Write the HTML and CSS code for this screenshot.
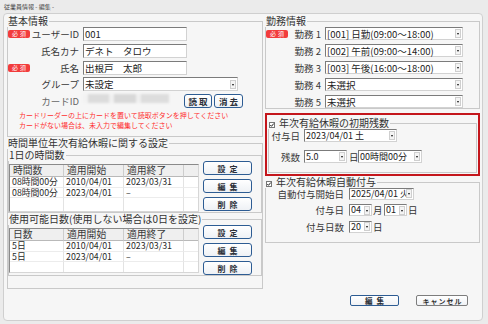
FILE: index.html
```html
<!DOCTYPE html>
<html lang="ja">
<head>
<meta charset="utf-8">
<title>従業員情報 - 編集 -</title>
<link rel="stylesheet" href="styles.css">
</head>
<body>
<div class="title">従業員情報 - 編集 -</div>
<main class="panel">
  <div class="cols">
    <div class="left">
      <fieldset class="fs basic">
        <legend>基本情報</legend>
        <div class="form">
          <div class="lbl"><span class="req">必須</span><span class="t">ユーザーID</span></div>
          <div class="inp w-id">001</div>
          <div class="lbl"><span class="t">氏名カナ</span></div>
          <div class="inp w-id">デネト　タロウ</div>
          <div class="lbl"><span class="req">必須</span><span class="t">氏名</span></div>
          <div class="inp w-id">出根戸　太郎</div>
          <div class="lbl"><span class="t">グループ</span></div>
          <div class="sel w-grp"><span class="v">未設定</span><span class="ar"></span></div>
          <div class="lbl"><span class="t dim">カードID</span></div>
          <div class="card"><div class="blur"></div><button class="btn sm">読取</button><button class="btn sm">消去</button></div>
        </div>
        <p class="note">カードリーダーの上にカードを置いて読取ボタンを押してください<br>カードがない場合は、未入力で編集してください</p>
      </fieldset>

      <fieldset class="fs hourly">
        <legend>時間単位年次有給休暇に関する設定</legend>
        <fieldset class="fs sub sub1">
          <legend>1日の時間数</legend>
          <div class="subrow">
            <div class="grid g1">
              <div class="h">時間数</div><div class="h">適用開始</div><div class="h">適用終了</div><div class="h"></div>
              <div>08時間00分</div><div>2010/04/01</div><div>2023/03/31</div><div></div>
              <div>08時間00分</div><div>2023/04/01</div><div>–</div><div></div>
              <div class="f"></div><div class="f"></div><div class="f"></div><div class="f"></div>
            </div>
            <div class="btns"><button class="btn">設定</button><button class="btn">編集</button><button class="btn">削除</button></div>
          </div>
        </fieldset>
        <fieldset class="fs sub sub2">
          <legend>使用可能日数(使用しない場合は0日を設定)</legend>
          <div class="subrow">
            <div class="grid g2">
              <div class="h">日数</div><div class="h">適用開始</div><div class="h">適用終了</div><div class="h"></div>
              <div>5日</div><div>2010/04/01</div><div>2023/03/31</div><div></div>
              <div>5日</div><div>2023/04/01</div><div>–</div><div></div>
              <div class="f"></div><div class="f"></div><div class="f"></div><div class="f"></div>
            </div>
            <div class="btns"><button class="btn">設定</button><button class="btn">編集</button><button class="btn">削除</button></div>
          </div>
        </fieldset>
      </fieldset>
    </div>

    <div class="right">
      <fieldset class="fs work">
        <legend>勤務情報</legend>
        <div class="form wform">
          <div class="lbl"><span class="req">必須</span><span class="t">勤務 1</span></div>
          <div class="sel w-work"><span class="v">[001] 日勤(09:00～18:00)</span><span class="ar"></span></div>
          <div class="lbl"><span class="t">勤務 2</span></div>
          <div class="sel w-work"><span class="v">[002] 午前(09:00～14:00)</span><span class="ar"></span></div>
          <div class="lbl"><span class="t">勤務 3</span></div>
          <div class="sel w-work"><span class="v">[003] 午後(16:00～18:00)</span><span class="ar"></span></div>
          <div class="lbl"><span class="t">勤務 4</span></div>
          <div class="sel w-work"><span class="v">未選択</span><span class="ar"></span></div>
          <div class="lbl"><span class="t">勤務 5</span></div>
          <div class="sel w-work"><span class="v">未選択</span><span class="ar"></span></div>
        </div>
      </fieldset>

      <div class="hilite">
        <fieldset class="fs init">
          <legend><svg class="cb" width="6" height="6" viewBox="0 0 6 6"><rect x="0.5" y="0.5" width="5" height="5" fill="#fff" stroke="#777"/><path d="M1.3 3 L2.5 4.3 L4.8 1.5" fill="none" stroke="#222" stroke-width="1"/></svg>年次有給休暇の初期残数</legend>
          <div class="form iform">
            <div class="lbl"><span class="t">付与日</span></div>
            <div class="ctrl"><div class="sel s-date"><span class="v">2023/04/01 土</span><span class="ar"></span></div></div>
            <div class="lbl"><span class="t">残数</span></div>
            <div class="ctrl"><div class="sel s-num"><span class="v">5.0</span><span class="ar"></span></div><span class="unit">日</span><div class="sel s-time"><span class="v">00時間00分</span><span class="ar"></span></div></div>
          </div>
        </fieldset>
      </div>

      <fieldset class="fs auto">
        <legend><svg class="cb" width="6" height="6" viewBox="0 0 6 6"><rect x="0.5" y="0.5" width="5" height="5" fill="#fff" stroke="#777"/><path d="M1.3 3 L2.5 4.3 L4.8 1.5" fill="none" stroke="#222" stroke-width="1"/></svg>年次有給休暇自動付与</legend>
        <div class="form aform">
          <div class="lbl"><span class="t">自動付与開始日</span></div>
          <div class="ctrl"><div class="sel s-date2"><span class="v clip">2025/04/01 火</span><span class="ar"></span></div></div>
          <div class="lbl"><span class="t">付与日</span></div>
          <div class="ctrl"><div class="sel s-two"><span class="v">04</span><span class="ar"></span></div><span class="unit">月</span><div class="sel s-two"><span class="v">01</span><span class="ar"></span></div><span class="unit">日</span></div>
          <div class="lbl"><span class="t">付与日数</span></div>
          <div class="ctrl"><div class="sel s-two"><span class="v">20</span><span class="ar"></span></div><span class="unit">日</span></div>
        </div>
      </fieldset>
    </div>
  </div>
  <div class="foot">
    <button class="fbtn primary">編集</button>
    <button class="fbtn cancel">キャンセル</button>
  </div>
</main>
</body>
</html>
```

FILE: styles.css
```css
* { box-sizing: border-box; }
html, body { margin: 0; padding: 0; }
body {
  width: 488px;
  height: 324px;
  overflow: hidden;
  background: #ebebeb;
  font-family: "Noto Sans CJK JP", "Noto Sans", sans-serif;
  color: #333;
}
.title {
  height: 13px;
  padding: 3px 0 0 4px;
  font-size: 6px;
  line-height: 7px;
  color: #444;
}
.panel {
  display: block;
  margin-left: 3px;
  width: 480px;
  height: 308px;
  background: #f6f6f6;
  border: 1px solid #cfcfcf;
  border-radius: 4px;
  padding: 1px 2px 0 3px;
}
.cols { display: flex; gap: 2px; align-items: flex-start; }
.left { width: 256px; flex: none; }
.right { width: 215px; flex: none; }

fieldset.fs {
  margin: 0;
  padding: 0;
  min-width: 0;
  border: 1px solid #c9c9c9;
}
fieldset.fs > legend {
  padding: 0 1px;
  margin-left: -1px;
  font-size: 10px;
  line-height: 12px;
  color: #333;
  white-space: nowrap;
}

/* basic info */
.basic { height: 122px; padding: 1px 0 0 3px; }
.form {
  display: grid;
  grid-template-columns: 72px auto;
  column-gap: 3px;
  row-gap: 2.75px;
  grid-auto-rows: 14px;
  align-items: center;
}
.lbl {
  display: flex;
  align-items: center;
  height: 100%;
  font-size: 9.5px;
  line-height: 12px;
  color: #383838;
  padding-right: 1px;
  white-space: nowrap;
}
.lbl .t { margin-left: auto; }
.lbl .dim { color: #666; }
.req {
  flex: none;
  width: 22px;
  height: 8px;
  background: #f23c3c;
  color: #fff;
  border-radius: 2px;
  font-size: 6px;
  line-height: 8px;
  text-align: center;
  letter-spacing: 2px;
  padding-left: 2px;
}
.inp {
  height: 14px;
  background: #fff;
  border: 1px solid;
  border-color: #7b7b7b #d2d2d2 #d2d2d2 #7b7b7b;
  font-size: 9.5px;
  line-height: 12px;
  padding-left: 1px;
  color: #222;
  white-space: nowrap;
}
.w-id { width: 104px; }
.sel {
  display: flex;
  align-items: center;
  height: 14px;
  background: #fff;
  border: 1px solid;
  border-color: #7b7b7b #d2d2d2 #d2d2d2 #7b7b7b;
  color: #222;
  font-size: 9.5px;
  line-height: 12px;
}
.sel .v { flex: 1; min-width: 0; padding-left: 1px; white-space: nowrap; }
.sel .v.clip { overflow: hidden; }
.sel .ar {
  flex: none;
  width: 6px;
  height: 9px;
  margin-right: 1px;
  border: 1px solid #cfcfcf;
  background: #f4f4f4;
  display: flex;
  align-items: center;
  justify-content: center;
}
.sel .ar::after {
  content: "";
  width: 0;
  height: 0;
  margin-top: 1px;
  border-top: 2px solid #111;
  border-left: 1px solid transparent;
  border-right: 1px solid transparent;
}
.w-grp { width: 155px; }
.card { display: flex; align-items: flex-start; height: 14px; }
.blur {
  width: 86px;
  height: 9px;
  margin-right: 15px;
  background:
    linear-gradient(90deg, #f2f2f2 0 6%, #dcdcdc 6% 30%, #f0f0f0 30% 36%, #d8d8d8 36% 62%, #efefef 62% 68%, #dddddd 68% 100%);
  filter: blur(1.2px);
}
.note {
  margin: 2px 0 0 11px;
  font-size: 7px;
  line-height: 10px;
  color: #ff2f2f;
  white-space: nowrap;
}

/* buttons */
.btn {
  display: block;
  padding: 0 0 0 4px;
  width: 49px;
  height: 14px;
  border: 1.5px solid #2d5c93;
  border-radius: 3px;
  background: linear-gradient(#ffffff, #eef1f5);
  font-family: "Noto Sans CJK JP", sans-serif;
  font-weight: bold;
  font-size: 8px;
  line-height: 11px;
  letter-spacing: 4px;
  color: #2a2f38;
  text-align: center;
}
.btn.sm {
  width: 28px;
  padding-left: 2px;
  letter-spacing: 2px;
  font-size: 8.5px;
  margin-right: 2px;
}
.btn.sm:last-child { width: 29px; margin-right: 0; }

/* hourly settings */
.hourly { height: 152px; margin-top: 1px; padding: 0 4px 0 4px; }
.hourly > legend { margin-left: -9px; }
.sub { padding: 0 0 3px 0; }
.sub1 > legend { margin-left: -4px; }
.sub2 { margin-top: 3px; }
.sub2 > legend { margin-left: 0; }
.subrow { display: flex; gap: 4px; align-items: flex-start; }
.btns { display: flex; flex-direction: column; gap: 4px; }
.grid {
  margin-top: 3px;
  width: 190px;
  display: grid;
  grid-template-columns: 54px 60px 60px 1fr;
  grid-template-rows: 12px 10.5px 10.5px 1fr;
  background: #fff;
  border: 1px solid;
  border-color: #8a8a8a #d6d6d6 #d6d6d6 #8a8a8a;
}
.g1 { height: 48px; }
.g2 { height: 45px; }
.grid > div {
  border-right: 1px solid #e3e3e3;
  border-bottom: 1px solid #ececec;
  font-size: 8.8px;
  line-height: 9.5px;
  padding-left: 2px;
  white-space: nowrap;
  color: #2a2a2a;
}
.grid > .h {
  background: #efefef;
  border-right-color: #cdcdcd;
  border-bottom-color: #b9b9b9;
  font-size: 9.8px;
  line-height: 11px;
  padding-left: 3px;
  color: #3a3a3a;
}
.grid > .f { border-bottom: none; }
.grid > div:nth-child(4n) { border-right: none; }

/* work info */
.work { margin: 0 3px 0 5px; padding: 1px 0 0 2px; }
.wform {
  grid-template-columns: 56px auto;
  grid-auto-rows: 13px;
  row-gap: 4px;
}
.wform .sel { height: 13px; }
.w-work { width: 138px; }

/* highlighted initial balance */
.hilite {
  margin-top: 4px;
  border: 2px solid #c4161c;
  padding: 2px 1px 1px 1px;
}
.init { height: 56px; padding: 2px 0 0 3px; }
.cb { display: inline-block; vertical-align: -0.5px; margin-right: 4px; }
.iform {
  grid-template-columns: 32px auto;
  grid-auto-rows: 13px;
  row-gap: 8px;
}
.ctrl { display: flex; align-items: center; height: 100%; }
.iform .sel, .aform .sel { height: 13px; font-size: 9px; }
.s-date { width: 93px; }
.s-num { width: 43px; }
.s-time { width: 64px; }
.unit { font-size: 9.5px; line-height: 12px; color: #333; margin: 0 0 0 2px; width: 10px; flex: none; }
.iform .unit { margin-left: 2px; width: 9px; }

/* auto grant */
.auto { height: 67px; margin: 1px 3px 0 3px; padding: 4px 0 0 3px; }
.aform {
  grid-template-columns: 79px auto;
  column-gap: 4px;
  grid-auto-rows: 11.5px;
  row-gap: 5px;
}
.aform .sel { height: 12px; }
.s-date2 { width: 65px; }
.s-two { width: 23px; }
.aform .unit { margin-left: 1px; width: 11px; }

/* footer */
.foot {
  margin-top: 6px;
  display: flex;
  justify-content: flex-end;
  gap: 17px;
  padding-right: 12px;
}
.fbtn {
  height: 11px;
  padding: 0;
  border-radius: 2px;
  background: linear-gradient(#ffffff, #f0f2f5);
  font-family: "Noto Sans CJK JP", sans-serif;
  font-weight: bold;
  font-size: 7.5px;
  line-height: 8px;
  color: #2a2f38;
  text-align: center;
}
.fbtn.primary {
  width: 49px;
  border: 1.5px solid #2d5c93;
  letter-spacing: 4px;
  padding-left: 4px;
}
.fbtn.cancel {
  width: 52px;
  border: 1.5px solid #7d7d7d;
  font-size: 7px;
  letter-spacing: 1px;
  padding-left: 1px;
  color: #333;
}
```
